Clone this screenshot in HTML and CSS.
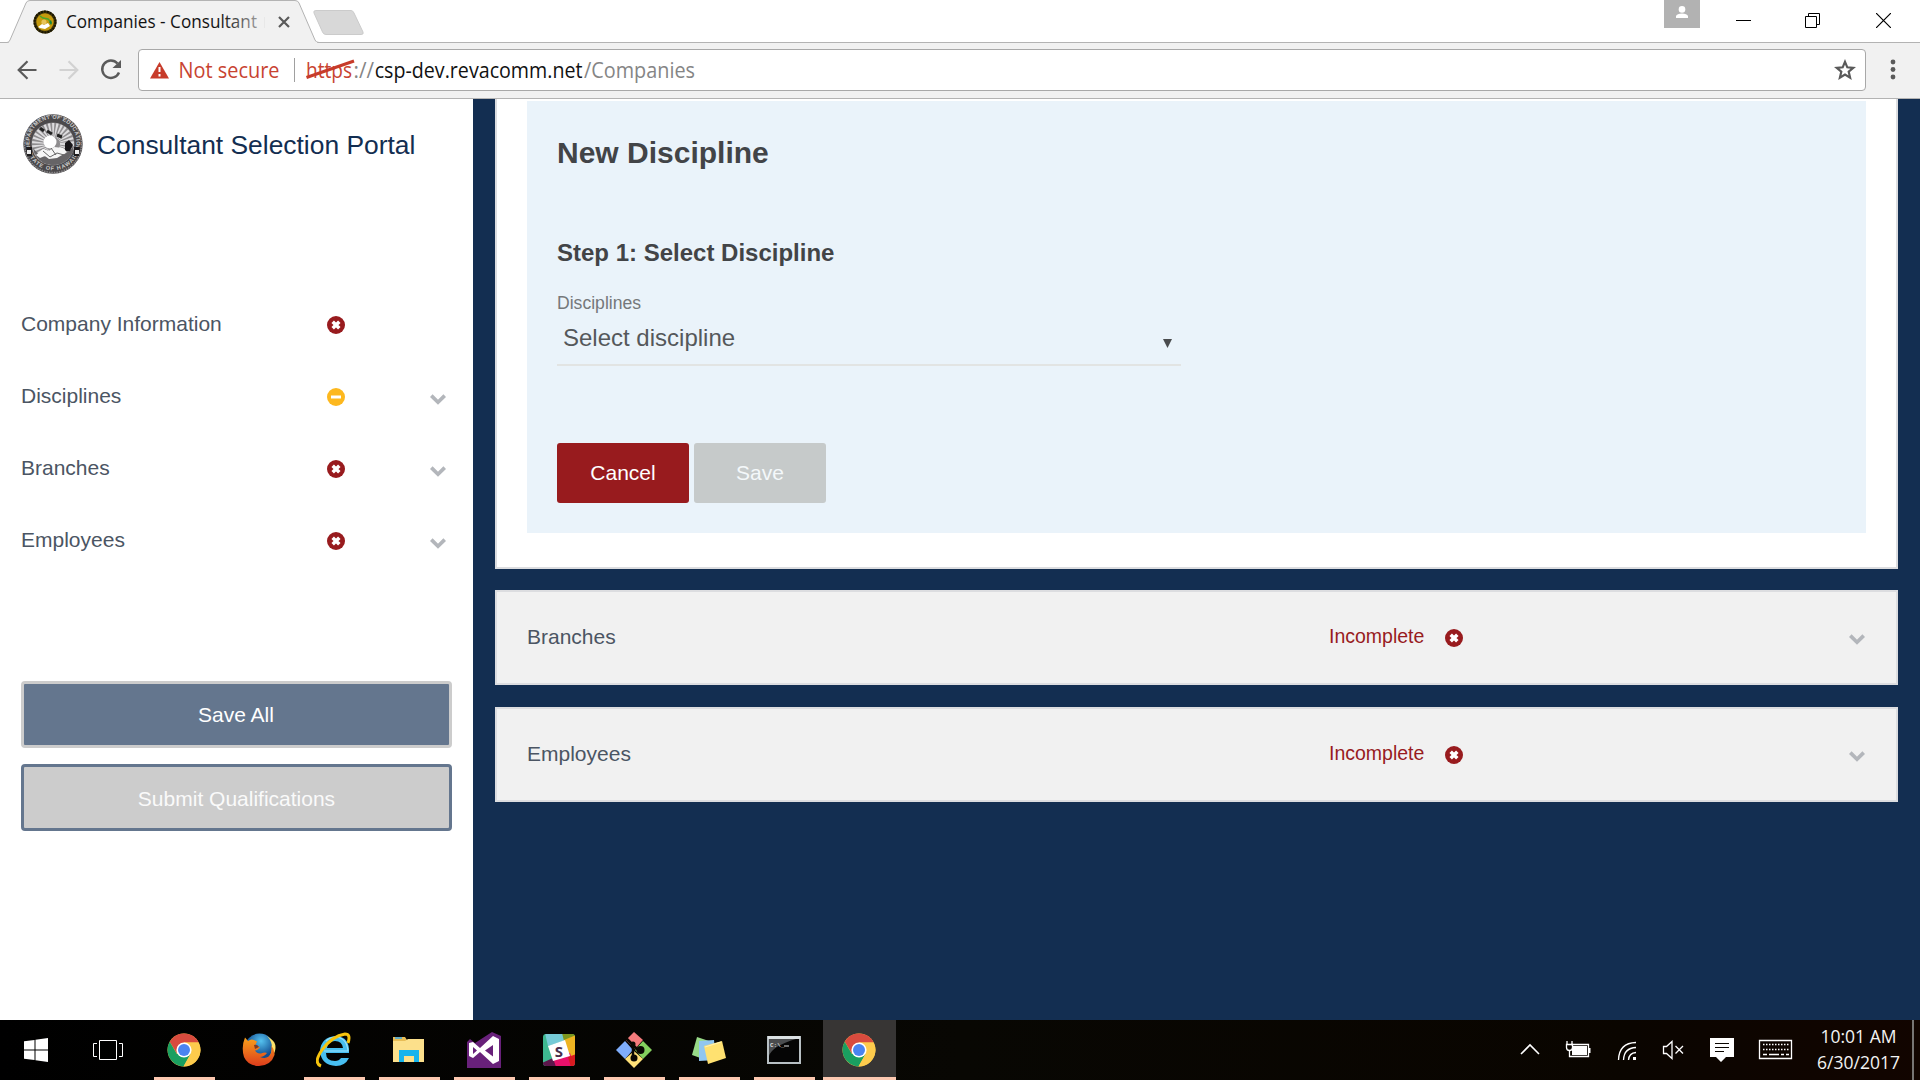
FILE: index.html
```html
<!DOCTYPE html>
<html lang="en">
<head>
<meta charset="utf-8">
<title>Companies - Consultant</title>
<link rel="stylesheet" href="styles.css">
</head>
<body>
<svg class="defs" width="0" height="0">
  <defs>
    <symbol id="bad" viewBox="0 0 18 18"><circle cx="9" cy="9" r="9" fill="#981b1e"/><path d="M5.700 5.700l6.600 6.600M12.300 5.700l-6.600 6.600" stroke="#fff" stroke-width="3.500"/></symbol>
    <symbol id="partial" viewBox="0 0 18 18"><circle cx="9" cy="9" r="9" fill="#fdb81e"/><path d="M4 9h10" stroke="#fff" stroke-width="3"/></symbol>
    <symbol id="chev" viewBox="0 0 16 11"><path d="M1.300 1.600L8 8.200l6.700-6.600" fill="none" stroke="#b3b6bb" stroke-width="3.700"/></symbol>
    <symbol id="chrome" viewBox="0 0 34 34">
      <circle cx="17" cy="17" r="16.500" fill="#fdcb4c"/>
      <path d="M2.700 8.800A16.500 16.500 0 0 1 31.700 9.500H17L9.900 20.500z" fill="#d84b3e"/>
      <path d="M2.700 8.800A16.500 16.500 0 0 0 16.500 33.500L23.800 20.500 17 17 9.900 20.900z" fill="#1a9f60"/>
      <path d="M31.700 9.500A16.500 16.500 0 0 1 16.500 33.500L23.600 21 17 9.500z" fill="#fdcb4c"/>
      <circle cx="17" cy="17" r="7.600" fill="#fff"/><circle cx="17" cy="17" r="6" fill="#4a84f0"/>
    </symbol>
  </defs>
</svg>

<header class="tabstrip">
  <div class="tab">
    <svg class="tab-shape" width="320" height="43" viewBox="0 0 320 43"><path d="M0 42.500H7Q9 42.500 10 40L26 3Q27 .5 30 .5H295Q298 .5 299 3L315 40Q316 42.500 319 42.500V43H0z" fill="#f1f1f1" stroke="#b3b3b3"/><path d="M9 43h308" stroke="#f1f1f1" stroke-width="2"/></svg>
    <div class="tab-content">
      <svg width="24" height="24" viewBox="0 0 24 24"><circle cx="12" cy="12" r="11.500" fill="#43370b"/><circle cx="12" cy="12" r="10.500" fill="none" stroke="#171503" stroke-width="2" stroke-dasharray="2 1"/><circle cx="12" cy="12" r="8.700" fill="#c59a0d"/><path d="M7 6l3 2 5 1 2 2" stroke="#48a52b" stroke-width="1.500" fill="none"/><path d="M16 12l2-2 1 3-1 2z" fill="#13863e"/><circle cx="11" cy="12" r="2.600" fill="#e7c45a"/><path d="M5 17l4-3 2 1 4-2 2 3-5 3-5-1z" fill="#fff"/></svg>
      <svg class="tab-title" width="201" height="30"><defs><linearGradient id="fade" gradientUnits="userSpaceOnUse" x1="155" x2="200" y1="0" y2="0"><stop stop-color="#111"/><stop offset="1" stop-color="#111" stop-opacity=".25"/></linearGradient></defs><text x="0" y="21" class="ui t18" textLength="191" lengthAdjust="spacingAndGlyphs" fill="url(#fade)">Companies - Consultant</text><path d="M198.500 10v11" stroke="#e8e8e8"/></svg>
      <svg width="12" height="12" viewBox="0 0 12 12"><path d="M1 1l10 10M11 1L1 11" stroke="#5a5a5a" stroke-width="2.200"/></svg>
    </div>
  </div>
  <svg class="newtab" width="52" height="26" viewBox="0 0 52 26"><path d="M3 .5H38Q40 .5 41 3L50 22Q51 24.500 48 24.500H13Q10.500 24.500 9.500 22L1 3Q0 .5 3 .5z" fill="#d8d8d8" stroke="#cbcbcb"/></svg>
  <div class="window">
    <div class="user"><svg width="12" height="13" viewBox="0 0 12 13"><circle cx="6" cy="3.400" r="3.300" fill="#fff"/><path d="M0 12V10Q1 7.500 6 7.500T12 10v2z" fill="#fff"/></svg></div>
    <svg class="win-min" width="15" height="15"><path d="M0 7.500h15" stroke="#000"/></svg>
    <svg class="win-max" width="15" height="15"><path d="M.5 3.500h11v11h-11zM3.500 3V.5h11v11H12" fill="none" stroke="#000"/></svg>
    <svg class="win-close" width="15" height="15"><path d="M0 0l15 15M15 0L0 15" stroke="#000" stroke-width="1.200"/></svg>
  </div>
</header>

<nav class="toolbar">
  <svg class="nav-icon" width="20" height="20" viewBox="0 0 20 20"><path d="M19.500 10H2M10.500 1.200L1.700 10l8.800 8.800" fill="none" stroke="#5a5a5a" stroke-width="2.200"/></svg>
  <svg class="nav-icon" width="20" height="20" viewBox="0 0 20 20"><path d="M.5 10H18M9.500 1.200l8.800 8.800-8.800 8.800" fill="none" stroke="#d2d2d2" stroke-width="2.200"/></svg>
  <svg class="nav-icon" width="22" height="22" viewBox="0 0 22 22"><path d="M17.500 4.500A8.700 8.700 0 1 0 19 13.500" fill="none" stroke="#5a5a5a" stroke-width="2.400"/><path d="M21 1v8h-8.500z" fill="#5a5a5a"/></svg>
  <div class="address">
    <svg width="560" height="40" viewBox="0 0 560 40">
      <path d="M20.500 12L30 28.500h-19z" fill="#c73b2a"/><path d="M20.500 17v5M20.500 24v2.500" stroke="#fff" stroke-width="2"/>
      <g class="ui t21">
        <text x="39.500" y="28" textLength="101" lengthAdjust="spacingAndGlyphs" fill="#c84331">Not secure</text>
        <text x="167" y="28" textLength="46" lengthAdjust="spacingAndGlyphs" fill="#c84331">https</text>
        <text x="214.500" y="28" textLength="20.500" lengthAdjust="spacingAndGlyphs" fill="#858585">://</text>
        <text x="235.700" y="28" textLength="207.800" lengthAdjust="spacingAndGlyphs" fill="#111">csp-dev.revacomm.net</text>
        <text x="445" y="28" textLength="111" lengthAdjust="spacingAndGlyphs" fill="#858585">/Companies</text>
      </g>
      <path d="M155.500 8v24" stroke="#a0a0a0"/>
      <path d="M167.500 27.500L215 11" stroke="#c73b2a" stroke-width="3"/>
    </svg>
    <svg class="star" width="22" height="22" viewBox="0 0 22 22"><path d="M11 2.800l2.300 5.500 6 .5-4.600 3.900 1.400 5.900L11 15.500l-5.100 3.100 1.400-5.900L2.700 8.800l6-.5z" fill="none" stroke="#5a5a5a" stroke-width="2.200"/></svg>
  </div>
  <svg class="menu" width="6" height="22"><g fill="#5a5a5a"><circle cx="3" cy="3" r="2.400"/><circle cx="3" cy="10.500" r="2.400"/><circle cx="3" cy="18" r="2.400"/></g></svg>
</nav>

<main class="page">
  <aside class="sidebar">
    <div class="brand">
      <svg width="60" height="60" viewBox="0 0 60 60">
        <defs><path id="ring" d="M7.500 35A23.500 23.500 0 1 1 52.500 35"/><path id="ring2" d="M5 39A26.700 26.700 0 0 0 55 39"/></defs>
        <circle cx="30" cy="30" r="29.700" fill="#4b494b"/>
        <circle cx="30" cy="30" r="28.600" fill="none" stroke="#8d8b8d" stroke-width="1.500" stroke-dasharray="1.500 1"/>
        <text class="seal" fill="#ccc"><textPath href="#ring" textLength="88">DEPARTMENT OF EDUCATION</textPath></text>
        <text class="seal" fill="#ccc"><textPath href="#ring2" textLength="61">STATE OF HAWAII</textPath></text>
        <circle cx="30" cy="30" r="21.500" fill="#8f8d8f"/>
        <circle cx="30" cy="30" r="14" fill="none" stroke="#dedddf" stroke-width="14" stroke-dasharray="1.600 1.350"/>
        <path d="M10 34Q17 44 30 43T50 33V38Q43 51 30 51T11 38z" fill="#666466"/>
        <circle cx="27" cy="28" r="6.500" fill="#fff"/>
        <path d="M17 14l4 3M24 17l5 3M34 21l5 2" stroke="#222" stroke-width="3"/>
        <path d="M42 29l4-3 4 5-3 6-5 1z" fill="#19171a"/>
        <path d="M13 41l7-6 6 2 5-4 9 1 4 4-10 6-8 1-4-3-5 2z" fill="#f6f6f6"/><path d="M20 37l7 6 7-4 7 2M28 34l5 7" stroke="#666" fill="none"/>
        <path d="M3 33h6v9H4zM51 33h6l-1 9h-5z" fill="#1d1b1d"/><path d="M4 36h4v4H4zM52 36h4v4h-4z" fill="#eee"/>
      </svg>
      <span>Consultant Selection Portal</span>
    </div>
    <ul class="steps">
      <li><span>Company Information</span><svg class="status"><use href="#bad"/></svg></li>
      <li><span>Disciplines</span><svg class="status"><use href="#partial"/></svg><svg class="chev"><use href="#chev"/></svg></li>
      <li><span>Branches</span><svg class="status"><use href="#bad"/></svg><svg class="chev"><use href="#chev"/></svg></li>
      <li><span>Employees</span><svg class="status"><use href="#bad"/></svg><svg class="chev"><use href="#chev"/></svg></li>
    </ul>
    <button class="side-btn save-all">Save All</button>
    <button class="side-btn submit">Submit Qualifications</button>
  </aside>
  <section class="content">
    <div class="card open">
      <div class="panel">
        <h2>New Discipline</h2>
        <h3>Step 1: Select Discipline</h3>
        <label>Disciplines</label>
        <div class="select"><span>Select discipline</span><svg width="9" height="9"><path d="M0 0h9L4.500 9z" fill="#4a4c4e"/></svg></div>
        <div class="actions"><button class="btn cancel">Cancel</button><button class="btn save">Save</button></div>
      </div>
    </div>
    <div class="card row"><span class="name">Branches</span><span class="state">Incomplete</span><svg class="status"><use href="#bad"/></svg><svg class="chev"><use href="#chev"/></svg></div>
    <div class="card row"><span class="name">Employees</span><span class="state">Incomplete</span><svg class="status"><use href="#bad"/></svg><svg class="chev"><use href="#chev"/></svg></div>
  </section>
</main>

<footer class="taskbar">
  <div class="apps">
    <div class="app start"><svg width="24" height="24" viewBox="0 0 24 24"><path d="M0 3.300L10.500 2v9.500H0zM11.500 1.800L24 0v11.500H11.500zM0 12.500h10.500V22L0 20.800zM11.500 12.500H24V24l-12.500-1.800z" fill="#fff"/></svg></div>
    <div class="app view"><svg width="30" height="20" viewBox="0 0 30 20"><path d="M6.500.5h17v19h-17zM4 3.500H.5v13H4M26 3.500h3.500v13H26" fill="none" stroke="#fff"/></svg></div>
    <div class="app run"><svg width="34" height="34"><use href="#chrome"/></svg></div>
    <div class="app"><svg width="34" height="34" viewBox="0 0 34 34"><defs><linearGradient id="fx" x1="0" y1="0" x2="0" y2="1"><stop stop-color="#f9a11b"/><stop offset="1" stop-color="#dc3c1c"/></linearGradient><radialGradient id="fb" cx=".55" cy=".25"><stop stop-color="#55c2ef"/><stop offset="1" stop-color="#124d91"/></radialGradient></defs><circle cx="17.500" cy="15.500" r="15" fill="url(#fb)"/><path d="M25 3Q30 8 30 15T24 28Q31 26 33 18T29 6z" fill="#fbe26a"/><path d="M3 4.500L6 8Q9 5.500 12 7L15 8.500 13.500 12 18 14.500Q16 17 13 17.500 15 21 19 20.500 23 19 25 20 22 24 18 24 26 27 29 20 30 15 29 12 33 17 32.500 22 29 32.500 17 33 6 33 2 24-1 14 3 4.500z" fill="url(#fx)"/><path d="M12 12q3-1 5 2l-4 2z" fill="#803a25"/></svg></div>
    <div class="app run"><svg width="36" height="36" viewBox="0 0 36 36"><path d="M10 21H33Q34 5 20 4 5 5 4 19 5 33 20 34 29 34 33 26H25Q23 29 19 29 10 29 10 21zM11 16Q12 9 19 9 26 9 27 16z" fill="#48bff1" fill-rule="evenodd"/><path d="M10 9Q14 5 20 5 31 6 32 19H8" fill="none" stroke="#9be3fb" stroke-width="1.200"/><path d="M5 34Q-3 31 6 18 16 4 29 2 35 2 32 11" fill="none" stroke="#f6c30d" stroke-width="3"/></svg></div>
    <div class="app run"><svg width="34" height="28" viewBox="0 0 34 28"><path d="M1 1h12l2 3h17v22H1z" fill="#e8bd56"/><path d="M1 5h12l3-2h16v23H1z" fill="#fce08b"/><path d="M3 2h7" stroke="#39a7e8" stroke-width="1.500"/><path d="M7 14h20v12h-5v-6H12v6H7z" fill="#16b4ed"/></svg></div>
    <div class="app run"><svg width="34" height="36" viewBox="0 0 34 36"><path d="M0 10L3 7l5 4L25 0l9 4v32H0z" fill="#68217a"/><path d="M2 11l4-1 7 6L26 4l6 3v22l-6 3-13-12-7 6-4-2zM6 15v7l4-3.500zM26 13l-8 5.500 8 6z" fill="#fff" fill-rule="evenodd"/></svg></div>
    <div class="app run"><svg width="34" height="34" viewBox="0 0 34 34"><defs><clipPath id="slackbox"><rect x="1" y="1" width="32" height="32" rx="3"/></clipPath></defs><g clip-path="url(#slackbox)"><path d="M0 0h34v34H0z" fill="#3eb890"/><path d="M3 0H22L24 7 6 13z" fill="#76cbd6"/><path d="M20 0h14v3L22 8z" fill="#7c971f"/><path d="M22 7l12-5v20l-6 2z" fill="#eeb422"/><path d="M10 26l18-6 5 14H12z" fill="#e8106b"/><path d="M0 30l11-5 3 9H0z" fill="#5c164b"/><path d="M26 24l8-3v13h-5z" fill="#d91b20"/><path d="M6 13l17-6 5 16-17 5z" fill="#fff"/></g><text x="17" y="23.500" class="slack">S</text></svg></div>
    <div class="app run"><svg width="36" height="36" viewBox="0 0 36 36"><path d="M18 0l9 8-8 9-9-9z" fill="#f47b7c"/><path d="M9 9l8 9-8 9-9-9z" fill="#7fadfb"/><path d="M27 9l9 9-9 9-8-9z" fill="#84d05e"/><path d="M18 19l9 8-9 9-9-9z" fill="#ffe178"/><path d="M10 6l7 7 7 7M17 12v13" stroke="#0a0803" stroke-width="2.500"/><g fill="#0a0803"><circle cx="17" cy="12" r="2.500"/><circle cx="24.500" cy="18" r="4"/><circle cx="18" cy="26" r="3.500"/></g></svg></div>
    <div class="app run"><svg width="35" height="29" viewBox="0 0 35 29"><path d="M6 1l15 5-6 18-14-5z" fill="#98da88"/><path d="M8 5l15-1 2 20-17 1z" fill="#91c6ef"/><path d="M13 10l18-5 4 17-18 6z" fill="#ffe170"/><path d="M14 11l16-5" stroke="#fff1b5"/></svg></div>
    <div class="app run"><svg width="34" height="28" viewBox="0 0 34 28"><path d="M1 1h32v26H1z" fill="#050505" stroke="#b8c0c4" stroke-width="2"/><path d="M1 1.500h32" stroke="#dbe1e4" stroke-width="3"/><path d="M2 3h27Q5 10 2 20z" fill="#4a4c4e"/><text x="3" y="10.500" class="cmd">C:\_</text><path d="M17 10h5" stroke="#ddd"/></svg></div>
    <div class="app run active"><svg width="34" height="34"><use href="#chrome"/></svg></div>
  </div>
  <svg class="tray" width="440" height="60" viewBox="0 0 440 60">
    <g fill="none" stroke="#fff" stroke-width="1.300">
      <path d="M41 34l9-9 9 9" stroke-width="1.600"/>
      <path d="M91 24.500h17.500v12H89.500V31"/><path d="M87 21v3M92 21v3M86.500 24.500h6v3q0 3-3 3t-3-3z"/>
      <path d="M138.500 40Q139 23 156 22.500M143.500 40Q144 28 156 27.500M148.500 40Q149 33 156 32.500"/>
      <path d="M183.500 26.500h3l5.500-5v17l-5.500-5h-3zM195.500 26l7.500 7.500M203 26l-7.500 7.500"/>
      <path d="M279.500 20.500h32v18h-32z"/><path d="M283 24.500h26M283 29.500h26" stroke-dasharray="1.500 1.500"/><path d="M283 34.500h4M289 34.500h10M301 34.500h3M306 34.500h3"/>
    </g>
    <path d="M92 26h15v9H92zM109 28h1.500v5H109zM153 37h3v3h-3zM230 18h24v19h-8l-5 5-5-5h-6z" fill="#fff"/>
    <path d="M235 23.500h14M235 27.500h14M235 31.500h9" stroke="#0a0500" stroke-width="1.200"/>
    <g class="ui t18" fill="#f3f3f3"><text x="340.500" y="23" textLength="76" lengthAdjust="spacingAndGlyphs">10:01 AM</text><text x="337" y="49" textLength="83" lengthAdjust="spacingAndGlyphs">6/30/2017</text></g>
    <path d="M433 0v60" stroke="#777573" stroke-width="2"/>
  </svg>
</footer>
</body>
</html>
```
FILE: styles.css
```css
* { box-sizing: border-box; }
body {
  margin: 0; width: 1920px; height: 1080px; overflow: hidden;
  display: flex; flex-direction: column;
  font-family: "Liberation Sans", Arial, sans-serif; background: #fff;
}
svg { display: block; flex: none; }
button { font-family: inherit; padding: 0; }
.defs { position: absolute; }
.ui { font-family: "Open Sans", "Noto Sans", sans-serif; }
.t18 { font-size: 18px; }
.t21 { font-size: 21px; }

.tabstrip { height: 43px; flex: none; display: flex; border-bottom: 1px solid #b3b3b3; }
.tab { width: 313px; height: 43px; position: relative; flex: none; }
.tab-shape { position: absolute; left: 0; top: 0; }
.tab-content { position: relative; display: flex; align-items: center; padding: 7px 0 0 33px; height: 37px; }
.tab-title { margin: 0 11px 0 9px; }
.newtab { margin-top: 10px; }
.window { margin-left: auto; display: flex; }
.user { width: 36px; height: 28px; background: #b2b2b2; display: flex; justify-content: center; padding-top: 6px; }
.win-min { margin: 13px 54px 0 36px; }
.win-max { margin: 13px 56px 0 0; }
.win-close { margin: 13px 29px 0 0; }

.toolbar { height: 56px; flex: none; display: flex; align-items: center; background: #f1f1f1; border-bottom: 1px solid #b3b3b3; padding: 0 23px 1px 17px; }
.nav-icon { margin-right: 22px; }
.nav-icon:nth-child(2) { margin-right: 21px; }
.nav-icon:nth-child(3) { margin: 0 16px 0 0; }
.address { width: 1728px; height: 42px; background: #fff; border: 1px solid #a8a8a8; border-radius: 4px; display: flex; align-items: center; justify-content: space-between; }
.star { margin-right: 9px; }
.menu { margin-left: 24px; }

.page { height: 921px; flex: none; display: flex; background: #132e51; }
.sidebar { width: 473px; background: #fff; padding: 14px 21px 0; color: #4b5563; }
.brand { display: flex; align-items: center; height: 62px; gap: 14px; margin-left: 2px; color: #132e51; font-size: 26.400px; white-space: nowrap; }
.brand svg { margin-top: -1px; }
.brand span { padding-top: 2px; }
.steps { list-style: none; margin: 113px 0 0; padding: 0; }
.steps li { height: 72px; display: flex; align-items: center; font-size: 21px; }
.steps span { width: 306px; }
.status { width: 18px; height: 18px; position: relative; top: 1px; }
.chev { width: 16px; height: 11px; position: relative; top: 3px; }
.steps .chev { margin-left: 85px; }
.side-btn { display: block; width: 431px; height: 67px; border: 3px solid #ccc; border-radius: 4px; background: #64768e; color: #fff; font-size: 21px; }
.save-all { margin-top: 105px; padding-right: 1px; }
.submit { margin-top: 16px; padding-top: 2px; background: #ccc; border-color: #64768e; color: #fafafa; }

.content { width: 1403px; margin-left: 22px; }
.card { border: 2px solid #dcdde0; background: #f1f1f1; padding: 0 30px; }
.open { height: 470px; border-top: 0; background: #fff; padding-top: 2px; }
.panel { height: 432px; background: #eaf3fa; padding: 32px 30px 0; color: #424447; }
h2 { font-size: 30px; line-height: 40px; margin: 0; }
h3 { font-size: 24px; line-height: 30px; margin: 65px 0 0; }
label { display: block; font-size: 17.600px; line-height: 22px; margin-top: 24px; color: #75787b; }
.select { width: 624px; height: 52px; border-bottom: 2px solid #e2e4e3; display: flex; align-items: center; justify-content: space-between; font-size: 24px; padding: 0 9px 2px 6px; color: #55585b; }
.select svg { margin-top: 10px; }
.actions { display: flex; gap: 5px; margin-top: 77px; }
.btn { width: 132px; height: 60px; border: 0; border-radius: 3px; font-size: 21px; color: #fff; }
.cancel { background: #981b1e; }
.save { background: #c6caca; color: #f4f8fa; }
.row { height: 95px; margin-top: 21px; display: flex; align-items: center; color: #4b5563; font-size: 21px; padding: 0 31px 2px 30px; }
.row + .row { margin-top: 22px; }
.name { width: 802px; }
.state { width: 116px; color: #981b1e; font-size: 19.500px; }
.row .chev { margin: 0 0 0 auto; }

.taskbar { height: 60px; flex: none; background: linear-gradient(90deg, #000, #080703 50%, #0a0500 85%, #120500); display: flex; justify-content: space-between; }
.apps { display: flex; }
.app { width: 61px; height: 60px; margin-right: 14px; display: flex; align-items: center; justify-content: center; border-bottom: 3px solid transparent; padding: 3px 2px 0 0; }
.start { width: 72px; margin: 0; padding-right: 0; }
.view { width: 72px; margin: 0 10px 0 0; padding-right: 0; }
.run { border-color: #fcc8b0; }
.active { width: 73px; margin: 0 0 0 -6px; background: #373534; }
.seal { font-size: 5.500px; font-weight: bold; }
.slack { font: bold 15px "Open Sans", sans-serif; text-anchor: middle; fill: #482e4b; }
.cmd { font: bold 6px "Liberation Mono", monospace; fill: #ddd; }
```
